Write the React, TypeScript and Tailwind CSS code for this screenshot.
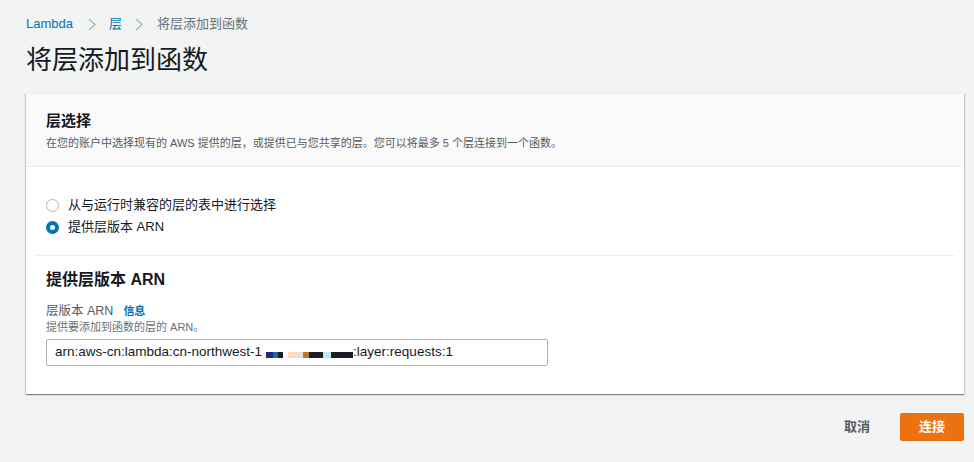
import React from 'react'

const FONT = { fontFamily: '"Liberation Sans", "Noto Sans CJK SC", sans-serif' }

// redacted account id, drawn as the coloured blocks seen in the screenshot
const REDACTED = [
  { w: 4, c: '#f7efe6' },
  { w: 7, c: '#1c2a78' },
  { w: 5, c: '#1f63b0' },
  { w: 5, c: '#1a1d24' },
  { w: 5, c: '#ffffff' },
  { w: 8, c: '#fddcb3' },
  { w: 7, c: '#e8dcdc' },
  { w: 6, c: '#b87830' },
  { w: 14, c: '#1a1d24' },
  { w: 8, c: '#c0e6f7' },
  { w: 22, c: '#1a1d24' },
]

function Chevron() {
  return (
    <svg width="8" height="13" viewBox="0 0 8 13" className="shrink-0">
      <polyline points="1,1 7,6.5 1,12" fill="none" stroke="#aab7b8" strokeWidth="1.4" />
    </svg>
  )
}

function Radio({ checked, label }: { checked?: boolean; label: string }) {
  return (
    <div className="flex items-center h-[20px]">
      {checked ? (
        <span className="w-[13px] h-[13px] rounded-full border-[4px] border-[#0073bb] bg-white shrink-0" />
      ) : (
        <span className="w-[13px] h-[13px] rounded-full border-[1.5px] border-[#aab7b8] bg-white shrink-0" />
      )}
      <span className="ml-[9px] text-[13px] text-[#16191f]">{label}</span>
    </div>
  )
}

export default function App() {
  return (
    <div style={FONT} className="w-full h-[462px] bg-[#f2f3f3] pl-[26px] pr-[10px] overflow-hidden">
      <div className="flex items-center h-[16px] mt-[16px] text-[13px]">
        <span className="text-[#0073bb]">Lambda</span>
        <span className="ml-[15px]"><Chevron /></span>
        <span className="ml-[13px] text-[#0073bb]">层</span>
        <span className="ml-[13px]"><Chevron /></span>
        <span className="ml-[14px] text-[#687078]">将层添加到函数</span>
      </div>

      <h1 className="mt-[12px] h-[32px] leading-[32px] text-[26px] font-normal text-[#16191f]">将层添加到函数</h1>

      <div className="mt-[17px] bg-white border-t border-[#eaeded] shadow-[0_1px_1px_0_rgba(0,28,36,0.3),1px_1px_1px_0_rgba(0,28,36,0.15),-1px_1px_1px_0_rgba(0,28,36,0.15)]">
        <div className="bg-[#fafafa] border-b border-[#eaeded] px-[20px] pt-[17px] pb-[15px]">
          <div className="text-[15px] leading-[20px] font-bold text-[#16191f]">层选择</div>
          <div className="mt-[4px] text-[11px] leading-[16px] text-[#545b64]">
            在您的账户中选择现有的 AWS 提供的层，或提供已与您共享的层。您可以将最多 5 个层连接到一个函数。
          </div>
        </div>

        <div className="pt-[28px] pb-[28px]">
          <div className="px-[20px] flex flex-col gap-[2px]">
            <Radio label="从与运行时兼容的层的表中进行选择" />
            <Radio checked label="提供层版本 ARN" />
          </div>

          <div className="mx-[10px] mt-[18px] border-t border-[#eaeded]" />

          <div className="px-[20px]">
            <div className="mt-[13px] text-[16px] leading-[22px] font-bold text-[#16191f]">提供层版本 ARN</div>
            <div className="mt-[12px] flex items-center h-[16px]">
              <span className="text-[12.5px] text-[#545b64]">层版本 ARN</span>
              <span className="ml-[10px] text-[11px] font-bold text-[#0073bb]">信息</span>
            </div>
            <div className="mt-[1px] text-[11px] leading-[14px] text-[#687078]">提供要添加到函数的层的 ARN。</div>
            <div className="mt-[5px] w-[502px] h-[27px] border border-[#aab7b8] rounded-[2px] bg-white flex items-center pl-[8px] text-[13.5px] text-[#16191f]">
              <span>arn:aws-cn:lambda:cn-northwest-1</span>
              <span className="flex h-[6px] mt-[4px]">
                {REDACTED.map((b, i) => (
                  <span key={i} className="h-[6px]" style={{ width: b.w, background: b.c }} />
                ))}
              </span>
              <span>:layer:requests:1</span>
            </div>
          </div>
        </div>
      </div>

      <div className="mt-[19px] flex items-center justify-end">
        <span className="text-[13px] font-bold text-[#545b64]">取消</span>
        <button className="ml-[30px] w-[64px] h-[28px] rounded-[2px] bg-[#ec7211] text-white text-[13px] font-bold">连接</button>
      </div>
    </div>
  )
}
